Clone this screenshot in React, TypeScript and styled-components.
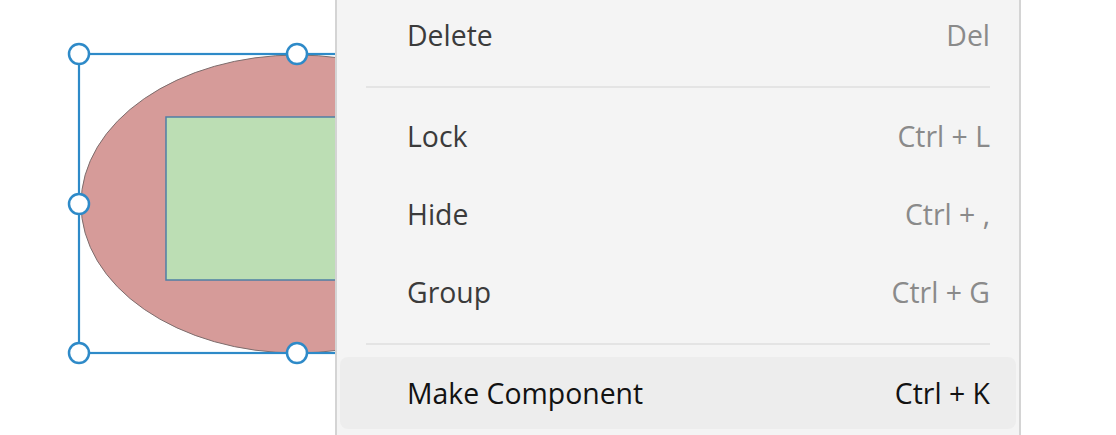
import React, { FC, ReactElement } from 'react';
import styled, { createGlobalStyle } from 'styled-components';

const GlobalStyle = createGlobalStyle`
    html, body {
        margin: 0;
        padding: 0;
        background: #ffffff;
        overflow: hidden;
    }
    #root {
        width: 1116px;
        height: 435px;
    }
`

const Stage = styled.div`
    position: relative;
    width: 1116px;
    height: 435px;
    overflow: hidden;
    background: #ffffff;
    font-family: "Open Sans", "Noto Sans", sans-serif;
`

const Canvas = styled.svg`
    display: block;
    width: 1116px;
    height: 435px;
`

const Menu = styled.div`
    position: absolute;
    top: -4px;
    left: 335px;
    width: 676px;
    padding: 0 3px 8px;
    background: #f4f4f4;
    border-left: 2px solid #d4d4d4;
    border-right: 2px solid #d4d4d4;
    display: flex;
    flex-direction: column;
`

const Item = styled.div<{ $active?: boolean }>`
    height: 72px;
    margin: 3px 0;
    padding: 0 26px 0 67px;
    border-radius: 8px;
    display: flex;
    align-items: center;
    justify-content: space-between;
    background: ${p => p.$active ? '#ededed' : 'transparent'};
    font-size: 28.4px;
`

const Label = styled.span<{ $active?: boolean }>`
    color: ${p => p.$active ? '#121212' : '#3b3b3b'};
`

const Shortcut = styled.span<{ $active?: boolean }>`
    color: ${p => p.$active ? '#121212' : '#8a8a8a'};
`

const Separator = styled.div`
    height: 2px;
    margin: 12px 26px 9px 26px;
    background: #e4e4e4;
`

type Entry = { label: string; keys: string; active?: boolean } | 'sep';

const entries: Entry[] = [
    { label: 'Delete', keys: 'Del' },
    'sep',
    { label: 'Lock', keys: 'Ctrl + L' },
    { label: 'Hide', keys: 'Ctrl + ,' },
    { label: 'Group', keys: 'Ctrl + G' },
    'sep',
    { label: 'Make Component', keys: 'Ctrl + K', active: true },
];

const handles: [number, number][] = [
    [79, 54], [297, 54], [515, 54],
    [79, 204], [515, 204],
    [79, 353], [297, 353], [515, 353],
];

const App: FC = (): ReactElement => {
    return (
        <Stage>
            <GlobalStyle />
            <Canvas viewBox="0 0 1116 435">
                <ellipse cx="297" cy="204" rx="216" ry="149" fill="#d69b99" stroke="#7d6d6d" strokeWidth="1" />
                <rect x="166" y="117" width="262" height="163" fill="#bcdeb4" stroke="#4f7fa5" strokeWidth="1.5" />
                <rect x="79" y="54" width="436" height="299" fill="none" stroke="#2e8ac8" strokeWidth="2.2" />
                {handles.map(([x, y]) => (
                    <circle key={`${x}-${y}`} cx={x} cy={y} r="10" fill="#ffffff" stroke="#2e8ac8" strokeWidth="2.5" />
                ))}
            </Canvas>
            <Menu>
                {entries.map((e, i) => e === 'sep'
                    ? <Separator key={i} />
                    : (
                        <Item key={i} $active={e.active}>
                            <Label $active={e.active}>{e.label}</Label>
                            <Shortcut $active={e.active}>{e.keys}</Shortcut>
                        </Item>
                    )
                )}
            </Menu>
        </Stage>
    );
}

export default App;
